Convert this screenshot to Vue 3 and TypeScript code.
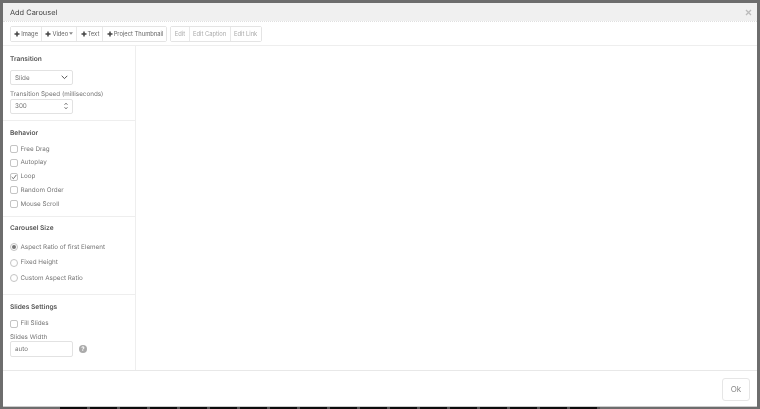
<script setup lang="ts">
const addButtons = [
  { label: 'Image' },
  { label: 'Video', caret: true },
  { label: 'Text' },
  { label: 'Project Thumbnail' },
]
const editButtons = ['Edit', 'Edit Caption', 'Edit Link']
const behavior = [
  { label: 'Free Drag', checked: false },
  { label: 'Autoplay', checked: false },
  { label: 'Loop', checked: true },
  { label: 'Random Order', checked: false },
  { label: 'Mouse Scroll', checked: false },
]
const sizes = [
  { label: 'Aspect Ratio of first Element', checked: true },
  { label: 'Fixed Height', checked: false },
  { label: 'Custom Aspect Ratio', checked: false },
]
</script>

<template>
  <div class="backdrop">
    <div class="modal">
      <header class="modal-head">
        <span class="modal-title">Add Carousel</span>
        <svg class="close" width="7" height="7" viewBox="0 0 7 7"><path d="M1 1l5 5M6 1L1 6" stroke="#bbb" stroke-width="1.3" /></svg>
      </header>
      <div class="toolbar">
        <div class="btn-group">
          <button v-for="b in addButtons" :key="b.label" class="tool-btn">
            <svg width="6" height="6" viewBox="0 0 6 6"><path d="M3 .5v5M.5 3h5" stroke="#444" stroke-width="1.5" /></svg>
            {{ b.label }}
            <svg v-if="b.caret" width="4" height="3" viewBox="0 0 5 3"><path d="M0 0h5L2.5 3z" fill="#888" /></svg>
          </button>
        </div>
        <div class="btn-group muted">
          <button v-for="b in editButtons" :key="b" class="tool-btn">{{ b }}</button>
        </div>
      </div>
      <div class="body">
        <aside class="sidebar">
          <section class="panel panel-transition">
            <h4>Transition</h4>
            <div class="field select">
              <span>Slide</span>
              <svg width="7" height="5" viewBox="0 0 7 5"><path d="M.7.8l2.8 2.8L6.3.8" fill="none" stroke="#555" stroke-width="1" /></svg>
            </div>
            <label class="field-label">Transition Speed (milliseconds)</label>
            <div class="field">
              <span>300</span>
              <svg width="4" height="8" viewBox="0 0 4 8"><path d="M.4 3L2 1l1.6 2M.4 5L2 7l1.6-2" fill="none" stroke="#777" stroke-width=".8" /></svg>
            </div>
          </section>
          <section class="panel panel-behavior">
            <h4>Behavior</h4>
            <div class="checks">
              <div v-for="c in behavior" :key="c.label" class="check-row">
                <span class="box">
                  <svg v-if="c.checked" width="7" height="6" viewBox="0 0 7 6"><path d="M.8 3l2 2L6.2.6" fill="none" stroke="#555" stroke-width="1" /></svg>
                </span>
                {{ c.label }}
              </div>
            </div>
          </section>
          <section class="panel panel-size">
            <h4>Carousel Size</h4>
            <div class="radios">
              <div v-for="r in sizes" :key="r.label" class="check-row">
                <span class="radio"><i v-if="r.checked"></i></span>
                {{ r.label }}
              </div>
            </div>
          </section>
          <section class="panel panel-slides">
            <h4>Slides Settings</h4>
            <div class="check-row"><span class="box"></span>Fill Slides</div>
            <label class="field-label">Slides Width</label>
            <div class="width-row">
              <div class="field"><span>auto</span></div>
              <span class="help">?</span>
            </div>
          </section>
        </aside>
        <main class="stage"></main>
      </div>
      <footer class="modal-foot">
        <button class="ok">Ok</button>
      </footer>
    </div>
    <div class="strip"></div>
  </div>
</template>

<style>
html, body { margin: 0; height: 100%; overflow: hidden; }
</style>

<style scoped>
.backdrop { position: relative; width: 760px; height: 409px; background: #6d6d6d; padding: 3px 3px 0 3px; box-sizing: border-box; font-family: Inter, "Liberation Sans", sans-serif; color: #666; overflow: hidden; text-rendering: geometricPrecision; }
.strip { position: absolute; left: 60px; width: 540px; bottom: 0; height: 2px; background: repeating-linear-gradient(90deg, #0c0c0c 0 27px, #555 27px 30px); }
.modal { height: 403.5px; background: #fff; display: flex; flex-direction: column; filter: grayscale(1) blur(0.3px); border-bottom: 1px solid #ccc; box-sizing: border-box; }
.modal-head { height: 18px; flex: none; background: #f0f0f0; display: flex; align-items: center; justify-content: space-between; padding: 0 5px 0 7px; font-size: 7.4px; color: #444; }
.toolbar { height: 25px; flex: none; box-sizing: border-box; border-top: 1px dotted #e0e0e0; border-bottom: 1px solid #eee; display: flex; align-items: center; gap: 3px; padding-left: 7px; }
.btn-group { display: flex; border: 1px solid #e4e4e4; border-radius: 2px; height: 14px; }
.tool-btn { border: 0; border-right: 1px solid #e8e8e8; background: #fff; padding: 0 3.2px; font: inherit; font-size: 5.8px; color: #666; display: flex; align-items: center; gap: 1px; }
.tool-btn:last-child { border-right: 0; }
.muted .tool-btn { color: #aaa; padding: 0 3.4px; }
.body { flex: 1; display: flex; min-height: 0; }
.sidebar { width: 131.5px; flex: none; border-right: 1px solid #eee; box-sizing: content-box; }
.panel { box-sizing: border-box; padding: 0 7px; border-bottom: 1px solid #eee; }
.panel:last-child { border-bottom: 0; }
.panel-transition { height: 75px; padding-top: 8.5px; }
.panel-behavior { height: 96px; padding-top: 8px; }
.panel-size { height: 78px; padding-top: 7px; }
.panel-slides { padding-top: 8px; }
h4 { margin: 0; font-size: 6.6px; line-height: 9px; font-weight: 600; color: #555; }
.field { box-sizing: border-box; width: 63px; height: 15px; border: 1px solid #e2e2e2; border-radius: 2px; display: flex; align-items: center; justify-content: space-between; padding: 0 4px; font-size: 6.3px; color: #777; }
.select { margin-top: 6.5px; }
.field-label { display: block; font-size: 6.3px; line-height: 9px; margin-top: 4.5px; color: #777; }
.checks { margin-top: 7.5px; display: flex; flex-direction: column; gap: 6.75px; }
.radios { margin-top: 10.5px; display: flex; flex-direction: column; gap: 8.7px; }
.check-row { display: flex; align-items: center; gap: 2.5px; font-size: 6.3px; line-height: 7px; color: #777; height: 7px; }
.box { box-sizing: border-box; width: 8px; height: 8px; border: 1px solid #c4c4c4; border-radius: 2px; display: flex; align-items: center; justify-content: center; flex: none; }
.radio { box-sizing: border-box; width: 8px; height: 8px; border: 1px solid #c4c4c4; border-radius: 50%; display: flex; align-items: center; justify-content: center; flex: none; }
.radio i { width: 4px; height: 4px; border-radius: 50%; background: #777; }
.panel-slides .check-row { margin-top: 8px; }
.panel-slides .field-label { margin-top: 6px; line-height: 8px; }
.width-row { display: flex; align-items: center; gap: 6px; }
.width-row .field { height: 16px; }
.help { width: 8px; height: 8px; border-radius: 50%; background: #aaa; color: #fff; font-size: 6px; font-weight: 700; display: flex; align-items: center; justify-content: center; }
.stage { flex: 1; }
.modal-foot { height: 36px; flex: none; box-sizing: border-box; border-top: 1px solid #e8e8e8; display: flex; justify-content: flex-end; align-items: center; padding: 2px 7px 0 0; }
.ok { width: 28px; height: 23px; border: 1px solid #e6e6e6; border-radius: 3px; background: #fff; font: inherit; font-size: 8px; color: #888; padding: 0; }
</style>
